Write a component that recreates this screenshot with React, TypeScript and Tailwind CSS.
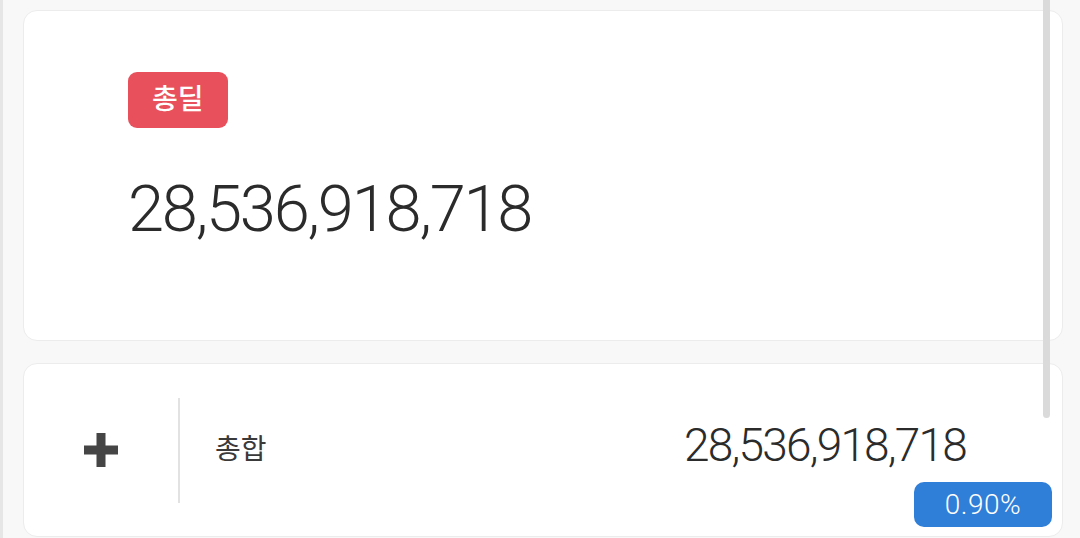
import React from "react";

const font = { fontFamily: '"Roboto", "Noto Sans CJK KR", sans-serif' };

const PlusIcon = () => (
  <svg width="34" height="34" viewBox="0 0 34 34" className="text-[#454545]">
    <rect x="12.5" y="0" width="9" height="34" fill="currentColor" />
    <rect x="0" y="12.5" width="34" height="9" fill="currentColor" />
  </svg>
);

const TotalCard = () => (
  <div className="h-[331px] rounded-[14px] border border-[#ececec] bg-white pl-[104px] pt-[61px]">
    <span className="inline-flex h-[56px] items-center rounded-[9px] bg-[#e8515c] px-[24px] text-[28px] font-medium text-white">
      총딜
    </span>
    <p className="mt-[49px] text-[65px] font-light leading-none tracking-[-2.2px] text-[#2b2b2b]">
      28,536,918,718
    </p>
  </div>
);

const SumRow = () => (
  <div className="relative flex h-[174px] items-center rounded-[14px] border border-[#ececec] bg-white">
    <div className="flex w-[154px] justify-center">
      <PlusIcon />
    </div>
    <div className="h-[105px] w-[2px] bg-[#e2e2e2]" />
    <span className="ml-[35px] text-[28px] text-[#3a3a3a]">총합</span>
    <span className="ml-auto mr-[96px] -mt-[10px] text-[46px] font-light tracking-[-1.8px] text-[#2b2b2b]">
      28,536,918,718
    </span>
    <span className="absolute bottom-[9px] right-[10px] flex h-[45px] w-[138px] items-center justify-center rounded-[10px] bg-[#2f7ed8] text-[28px] font-light tracking-[0.5px] text-white">
      0.90%
    </span>
  </div>
);

export default function App() {
  return (
    <div
      className="relative h-[538px] w-[1080px] overflow-hidden border-l-[3px] border-[#e6e6e6] bg-[#f8f8f8] pl-[20px] pr-[17px] pt-[10px]"
      style={font}
    >
      <div className="flex flex-col gap-[22px]">
        <TotalCard />
        <SumRow />
      </div>
      <div className="absolute right-[30px] top-0 h-[418px] w-[7px] rounded-b-full bg-[#dadada]" />
    </div>
  );
}
